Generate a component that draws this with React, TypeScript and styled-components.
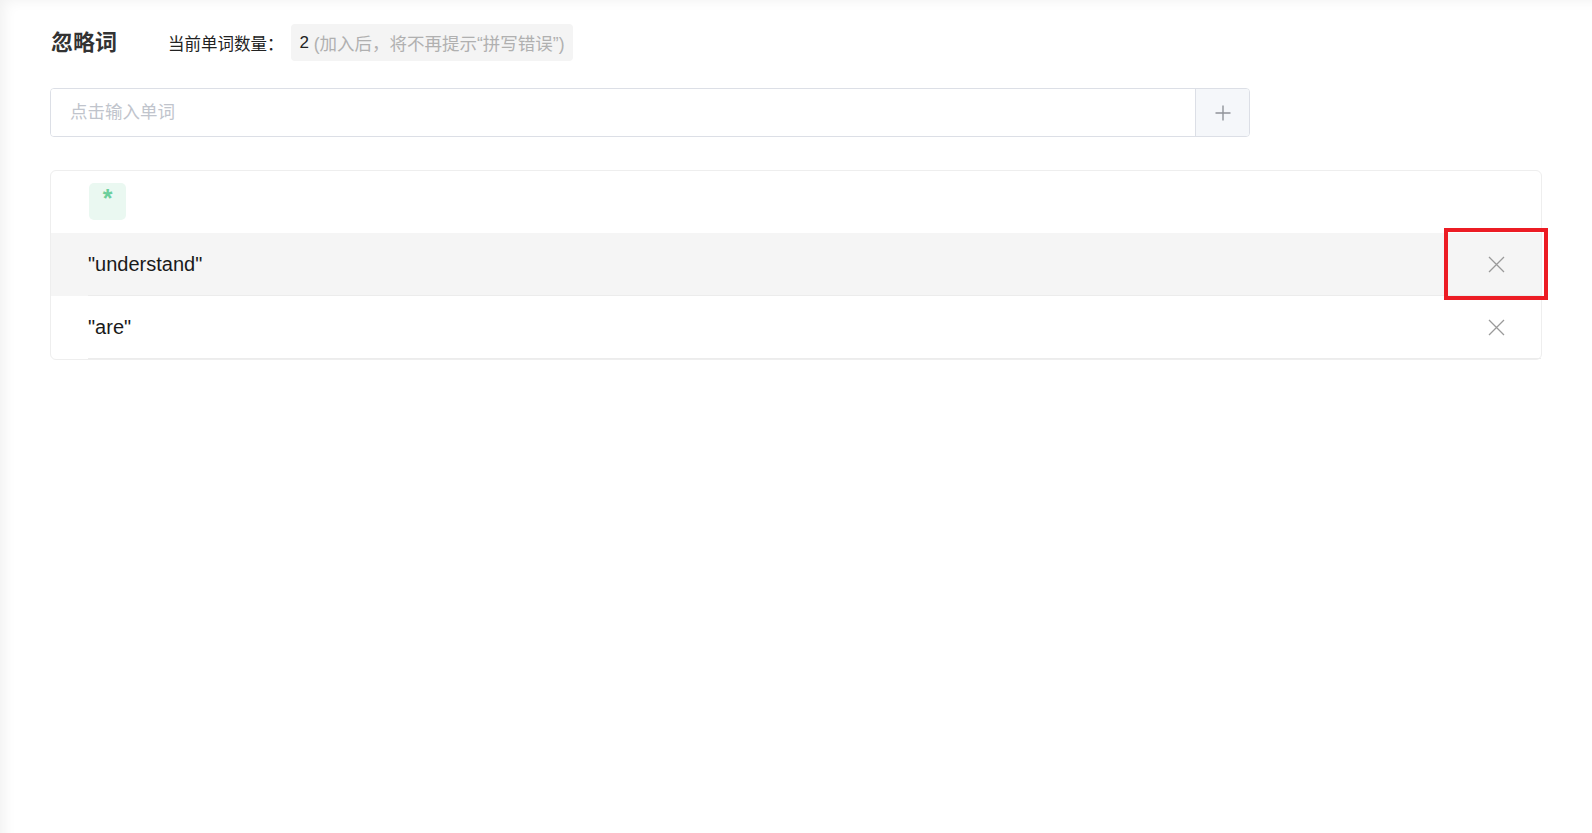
import styled, { createGlobalStyle } from "styled-components";

const GlobalStyle = createGlobalStyle`
  html, body {
    margin: 0;
    padding: 0;
    background: #ffffff;
  }
  body {
    font-family: "Liberation Sans", Arial, "Noto Sans CJK SC", sans-serif;
    color: #222222;
  }
  * {
    box-sizing: border-box;
  }
`;

const Page = styled.div`
  min-height: 100vh;
  padding: 24px 50px 40px 50px;
  background: #ffffff;
  box-shadow: inset 14px 10px 14px -10px rgba(0, 0, 0, 0.06);
`;

const Header = styled.div`
  display: flex;
  align-items: center;
  height: 37px;
`;

const Title = styled.h2`
  margin: 0 51px 0 1px;
  font-size: 22px;
  font-weight: 700;
  color: #333333;
  line-height: 37px;
`;

const CountLabel = styled.span`
  font-size: 16.5px;
  color: #222222;
  margin-right: 7px;
`;

const CountTag = styled.span`
  display: inline-flex;
  align-items: center;
  height: 37px;
  padding: 0 8px 0 9px;
  background: #f4f4f4;
  border-radius: 4px;
  font-size: 17px;
  color: #222222;
  white-space: pre;
`;

const Hint = styled.span`
  color: #b0b0b0;
  font-size: 17.5px;
`;

const InputGroup = styled.div`
  display: flex;
  width: 1200px;
  height: 49px;
  margin-top: 27px;
  border: 1px solid #dcdfe6;
  border-radius: 4px;
  overflow: hidden;
`;

const WordInput = styled.input`
  flex: 1;
  border: none;
  outline: none;
  padding: 0 19px;
  font-size: 17.5px;
  font-family: inherit;
  color: #333333;
  background: #ffffff;

  &::placeholder {
    color: #c0c4cc;
  }
`;

const AddButton = styled.button`
  width: 54px;
  border: none;
  border-left: 1px solid #dcdfe6;
  background: #f5f7fa;
  display: flex;
  align-items: center;
  justify-content: center;
  cursor: pointer;
  padding: 0;
`;

const Card = styled.div`
  margin-top: 33px;
  border: 1px solid #eeeeee;
  border-radius: 6px;
`;

const CardHead = styled.div`
  height: 62px;
  padding: 12px 0 0 38px;
`;

const StarTag = styled.div`
  width: 37px;
  height: 37px;
  border-radius: 5px;
  background: #eaf8f1;
  color: #6ccf9c;
  font-size: 25px;
  font-weight: 700;
  line-height: 30px;
  text-align: center;
`;

const Row = styled.div<{ $active?: boolean }>`
  display: flex;
  background: ${(p) => (p.$active ? "#f5f5f5" : "transparent")};
  padding-left: 37px;
`;

const RowInner = styled.div`
  flex: 1;
  display: flex;
  align-items: center;
  height: 63px;
  border-bottom: 1px solid #ececec;
`;

const Word = styled.span`
  flex: 1;
  font-size: 20px;
  color: #1a1a1a;
`;

const DeleteCell = styled.button<{ $marked?: boolean }>`
  width: 94px;
  height: 62px;
  margin-right: -2px;
  display: flex;
  align-items: center;
  justify-content: center;
  border: none;
  background: transparent;
  padding: 0;
  cursor: pointer;
  outline: ${(p) => (p.$marked ? "4px solid #ec1c24" : "none")};
  outline-offset: 1px;
`;

const words = [
  { id: 1, text: "understand" },
  { id: 2, text: "are" },
];

const PlusIcon = () => (
  <svg width="18" height="18" viewBox="0 0 18 18">
    <path d="M9 1.5v15M1.5 9h15" stroke="#909399" strokeWidth="1.4" />
  </svg>
);

const CloseIcon = () => (
  <svg width="17" height="17" viewBox="0 0 17 17">
    <path d="M1 1l15 15M16 1L1 16" stroke="#9a9a9a" strokeWidth="1.3" />
  </svg>
);

const App = () => {
  return (
    <>
      <GlobalStyle />
      <Page>
        <Header>
          <Title>忽略词</Title>
          <CountLabel>当前单词数量：</CountLabel>
          <CountTag>
            {words.length} <Hint>(加入后，将不再提示“拼写错误”)</Hint>
          </CountTag>
        </Header>

        <InputGroup>
          <WordInput placeholder="点击输入单词" />
          <AddButton>
            <PlusIcon />
          </AddButton>
        </InputGroup>

        <Card>
          <CardHead>
            <StarTag>*</StarTag>
          </CardHead>
          {words.map((w, i) => (
            <Row key={w.id} $active={i === 0}>
              <RowInner>
                <Word>"{w.text}"</Word>
                <DeleteCell $marked={i === 0}>
                  <CloseIcon />
                </DeleteCell>
              </RowInner>
            </Row>
          ))}
        </Card>
      </Page>
    </>
  );
};

export default App;
